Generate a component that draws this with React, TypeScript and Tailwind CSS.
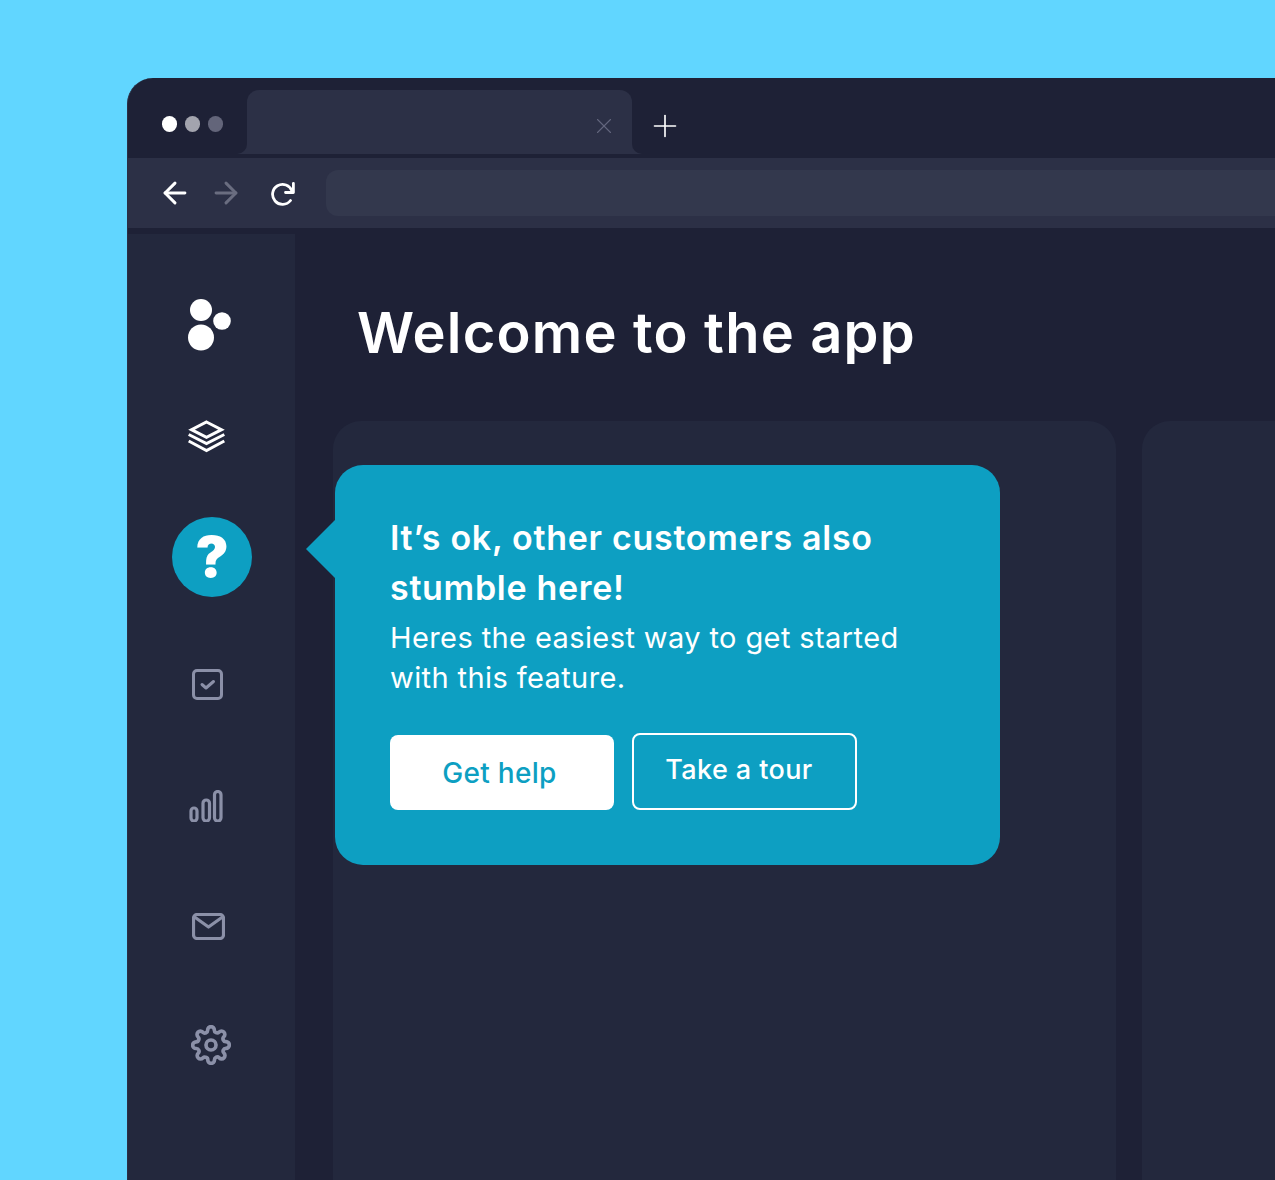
import { ArrowLeft, ArrowRight, X, Plus } from "lucide-react";
import { FiSettings } from "react-icons/fi";

const LogoIcon = () => (
    <svg width="46" height="54" viewBox="0 0 46 54" fill="white">
        <circle cx="14" cy="12" r="11" />
        <circle cx="35" cy="23" r="8.8" />
        <circle cx="14" cy="39.5" r="13" />
    </svg>
);

const LayersIcon = () => (
    <svg width="38" height="34" viewBox="0 0 38 34" fill="none" stroke="white" strokeWidth="3">
        <path d="M18.5 2 L33.5 9.7 L18.5 17.4 L3.5 9.7 Z" />
        <path d="M0.7 14.5 L18.5 23.5 L36.3 14.5" />
        <path d="M0.7 21 L18.5 30.5 L36.3 21" />
    </svg>
);

const ReloadIcon = () => (
    <svg width="26" height="26" viewBox="0 0 26 26" fill="none" stroke="white" strokeWidth="2.8" strokeLinecap="round" strokeLinejoin="round">
        <path d="M19.5 19.5 A10 10 0 1 1 21 10" />
        <path d="M22.4 2.5 V11.5 H14.5" />
    </svg>
);

const CheckIcon = () => (
    <svg width="32" height="32" viewBox="0 0 32 32" fill="none" stroke="#8b90a8" strokeWidth="3">
        <rect x="1.5" y="1.5" width="28" height="28" rx="3.5" />
        <path d="M10 15.5 L14 19 L21.5 12.5" strokeLinecap="round" strokeLinejoin="round" />
    </svg>
);

const BarsIcon = () => (
    <svg width="34" height="32" viewBox="0 0 34 32" fill="none" stroke="#8b90a8" strokeWidth="3.2">
        <rect x="2" y="18" width="6" height="13" rx="3" />
        <rect x="14" y="10" width="6.5" height="21" rx="3.2" />
        <rect x="25.5" y="1.5" width="6.5" height="29.5" rx="3.2" />
    </svg>
);

const MailIcon = () => (
    <svg width="33" height="27" viewBox="0 0 33 27" fill="none" stroke="#8b90a8" strokeWidth="3.2">
        <rect x="1.5" y="1.5" width="30" height="24" rx="3.5" />
        <path d="M2.5 4 L16.5 14 L30.5 4" strokeLinejoin="round" />
    </svg>
);

const SideItem = ({ className, children }: { className: string; children: React.ReactNode }) => (
    <div className={`flex items-center justify-center ${className}`}>{children}</div>
);

export default function App() {
    return (
        <div className="h-[1180px] w-[1275px] overflow-hidden bg-[#61d6ff] pl-[127px] pt-[78px] font-['Inter',sans-serif]">
            <div className="flex h-[1102px] w-[1148px] flex-col overflow-hidden rounded-tl-[26px] border-l border-[#2a2f45] bg-[#1e2136]">
                {/* tabs */}
                <div className="flex h-[80px] shrink-0 items-start">
                    <div className="ml-[34px] mt-[38px] flex w-[85px] items-center gap-2">
                        <span className="h-4 w-[15px] rounded-full bg-white" />
                        <span className="h-4 w-[15px] rounded-full bg-[#a3a4ae]" />
                        <span className="h-4 w-[15px] rounded-full bg-[#63657a]" />
                    </div>
                    <div className="relative mt-3 flex h-16 w-[385px] items-center justify-end rounded-t-xl bg-[#2c3046] pr-[15px] pt-2">
                        <div className="absolute bottom-0 left-[-10px] h-2.5 w-2.5 bg-[#2c3046]">
                            <div className="h-full w-full rounded-br-[10px] bg-[#1e2136]" />
                        </div>
                        <div className="absolute bottom-0 right-[-10px] h-2.5 w-2.5 bg-[#2c3046]">
                            <div className="h-full w-full rounded-bl-[10px] bg-[#1e2136]" />
                        </div>
                        <X size={26} strokeWidth={1} className="text-[#62657c]" />
                    </div>
                    <Plus size={36} strokeWidth={1.1} className="ml-[15px] mt-[30px] text-white" />
                </div>

                {/* toolbar */}
                <div className="flex h-[70px] shrink-0 items-center bg-[#2c3046] pl-[30px]">
                    <ArrowLeft size={34} strokeWidth={2.1} className="text-white" />
                    <ArrowRight size={34} strokeWidth={2.1} className="ml-[17px] text-[#6a6d80]" />
                    <div className="ml-[28px] mt-0.5">
                        <ReloadIcon />
                    </div>
                    <div className="ml-[29px] h-[46px] flex-1 rounded-l-xl bg-[#33384d]" />
                </div>

                <div className="flex flex-1 pt-1.5">
                    {/* sidebar */}
                    <aside className="flex w-[167px] shrink-0 flex-col bg-[#23283d]">
                        <SideItem className="ml-[59px] mt-[64px] h-[54px] w-[46px]">
                            <LogoIcon />
                        </SideItem>
                        <SideItem className="ml-[60px] mt-[68px] h-[34px] w-[38px]">
                            <LayersIcon />
                        </SideItem>
                        <div className="ml-[44px] mt-[63px] flex h-[80px] w-[80px] items-center justify-center rounded-full bg-[#0d9fc2] text-[56px] font-black leading-none text-white">
                            ?
                        </div>
                        <SideItem className="ml-[64px] mt-[72px] h-8 w-8">
                            <CheckIcon />
                        </SideItem>
                        <SideItem className="ml-[61px] mt-[89px] h-8 w-[34px]">
                            <BarsIcon />
                        </SideItem>
                        <SideItem className="ml-[64px] mt-[91px] h-[27px] w-[33px]">
                            <MailIcon />
                        </SideItem>
                        <SideItem className="ml-[64px] mt-[86px] h-[38px] w-[38px]">
                            <FiSettings size={40} strokeWidth={2.2} className="shrink-0 text-[#8b90a8]" />
                        </SideItem>
                    </aside>

                    {/* content */}
                    <main className="flex min-w-0 flex-1 flex-col">
                        <h1 className="ml-[62px] mt-[62px] h-[125px] text-[56px] font-semibold leading-[74px] tracking-[1.2px] text-white">
                            Welcome to the app
                        </h1>
                        <div className="ml-[38px] flex flex-1 gap-[26px]">
                            <div className="relative w-[783px] shrink-0 rounded-t-[28px] bg-[#23283d]">
                                <div className="absolute left-[2px] top-[44px] h-[400px] w-[665px] rounded-[28px] bg-[#0d9fc2] pl-[55px] pt-[48px] text-white">
                                    <div className="absolute left-[-29px] top-[54px] h-[60px] w-[30px] bg-[#0d9fc2] [clip-path:polygon(100%_0,100%_100%,0_50%)]" />
                                    <p className="text-[34px] font-semibold leading-[50px] tracking-[0.7px]">
                                        It’s ok, other customers also
                                        <br />
                                        stumble here!
                                    </p>
                                    <p className="mt-[5px] text-[29px] leading-[40px] tracking-[0.4px]">
                                        Heres the easiest way to get started
                                        <br />
                                        with this feature.
                                    </p>
                                    <div className="mt-[35px] flex items-start gap-[18px]">
                                        <button className="mt-[2px] h-[75px] w-[224px] rounded-lg bg-white pr-[5px] text-[28px] font-medium tracking-[0.3px] text-[#0d9fc2]">
                                            Get help
                                        </button>
                                        <button className="h-[77px] w-[225px] rounded-lg border-2 border-white pb-0.5 pr-[11px] text-[27px] font-medium tracking-[0.4px] text-white">
                                            Take a tour
                                        </button>
                                    </div>
                                </div>
                            </div>
                            <div className="flex-1 rounded-tl-[28px] bg-[#23283d]" />
                        </div>
                    </main>
                </div>
            </div>
        </div>
    );
}
